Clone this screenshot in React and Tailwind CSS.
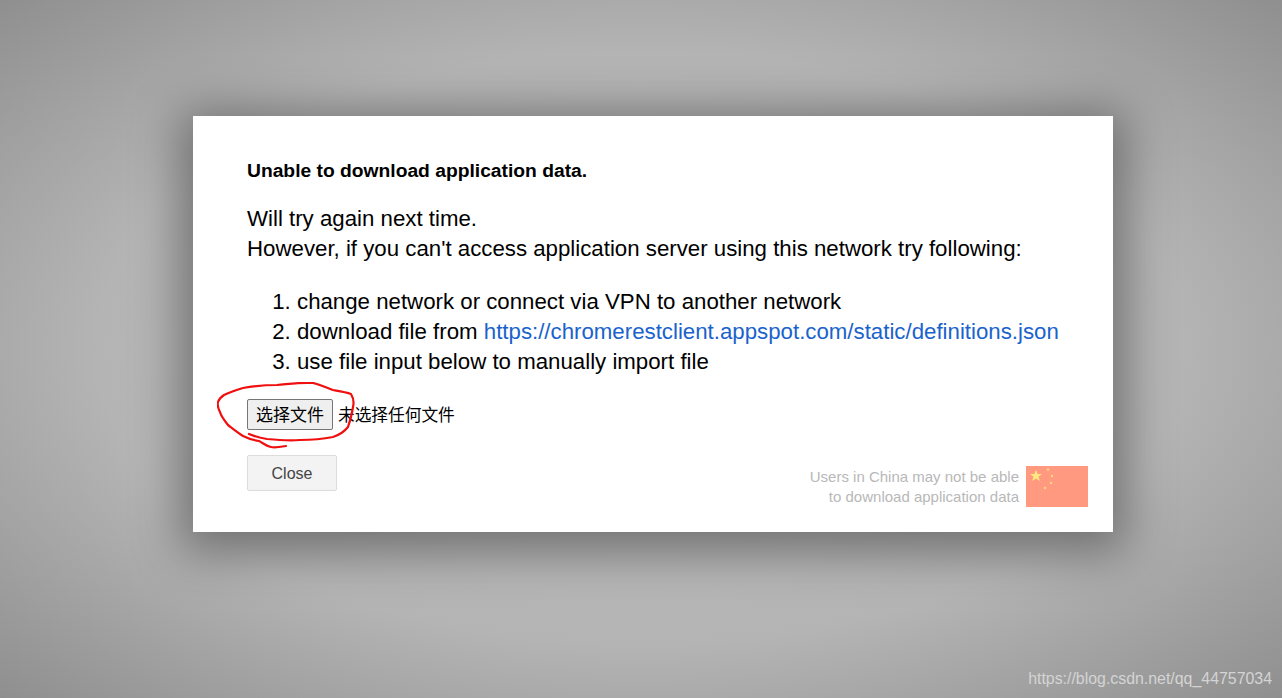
const fontStack = { fontFamily: '"Liberation Sans", "Noto Sans CJK SC", Arial, sans-serif' };

function RedCircle() {
  return (
    <svg className="absolute left-[-30px] top-[-17px] pointer-events-none" width="140" height="70" viewBox="0 0 140 70" fill="none">
      <path
        d="M69 64 C63 65 58 66 54 65 C49 64 46 61 42 59 C35 58 30 56 26 54 C20 50 15 46 11 43 C7 38 4 34 3 30 C1 26 0 23 1 20 C2 17 4 15 7 13 C13 10 19 8 26 6 C38 4 49 3 60 3 C72 2 85 0 96 1 C104 3 110 6 116 8 C122 9 129 10 134 12 C137 17 137 21 136 25 C135 32 133 39 131 45 C127 50 122 53 116 55 C106 57 94 58 83 58 C72 59 60 58 50 57 C43 56 37 54 32 52"
        stroke="#f00f0f"
        strokeWidth="2.2"
        strokeLinecap="round"
        strokeLinejoin="round"
      />
    </svg>
  );
}

function Flag() {
  return (
    <svg width="62" height="41" viewBox="0 0 62 41" className="shrink-0">
      <rect width="62" height="41" fill="#ff9980" />
      <polygon points="10,4 11.6,8 16,8 12.5,10.6 13.8,15 10,12.4 6.2,15 7.5,10.6 4,8 8.4,8" fill="#ffe97f" />
      <circle cx="22" cy="3.5" r="1.2" fill="#ffd97f" />
      <circle cx="26" cy="10" r="1.2" fill="#ffd97f" />
      <circle cx="25" cy="17" r="1.2" fill="#ffd97f" />
      <circle cx="19" cy="22" r="1.2" fill="#ffd97f" />
    </svg>
  );
}

export default function App() {
  return (
    <div
      style={fontStack}
      className="relative w-full h-[698px] overflow-hidden flex items-start justify-center pt-[116px] pl-[24px] bg-[radial-gradient(ellipse_at_center,#bdbdbd_0%,#b4b4b4_60%,#8f8f8f_100%)]"
    >
      <div className="w-[920px] h-[416px] bg-white px-[54px] pt-[44px] text-black shadow-[0_8px_45px_12px_rgba(0,0,0,0.38)]">
        <p className="text-[19.25px] leading-[22px] font-bold">Unable to download application data.</p>
        <p className="mt-[22px] text-[22.25px] leading-[30px]">
          Will try again next time.
          <br />
          However, if you can't access application server using this network try following:
        </p>
        <ol className="mt-[23px] pl-[50px] list-decimal whitespace-nowrap text-[22.25px] leading-[30px]">
          <li>change network or connect via VPN to another network</li>
          <li>
            download file from{' '}
            <a href="#" className="text-[#1a62cc]">https://chromerestclient.appspot.com/static/definitions.json</a>
          </li>
          <li>use file input below to manually import file</li>
        </ol>
        <div className="relative mt-[22px] flex items-center h-[31px]">
          <RedCircle />
          <button className="w-[86px] h-[31px] pt-[2px] rounded-[2px] border border-[#767676] bg-[#efefef] text-[17px] text-black">选择文件</button>
          <span className="ml-[5px] pt-[2px] text-[16.7px] text-black">未选择任何文件</span>
        </div>
        <div className="mt-[25px] flex items-start justify-between">
          <button className="w-[90px] h-[36px] pt-[2px] rounded-[2px] border border-[#dcdcdc] bg-[#f3f3f3] text-[16px] text-[#444444]">Close</button>
          <div className="mt-[11px] mr-[-29px] flex items-start gap-[7px]">
            <p className="text-right text-[15px] leading-[20px] pt-px text-[#b8b8b8]">
              Users in China may not be able
              <br />
              to download application data
            </p>
            <Flag />
          </div>
        </div>
      </div>
      <span className="absolute right-[10px] bottom-[10px] text-[15.9px] leading-[18px] text-[#d4d4d4]">https://blog.csdn.net/qq_44757034</span>
    </div>
  );
}
